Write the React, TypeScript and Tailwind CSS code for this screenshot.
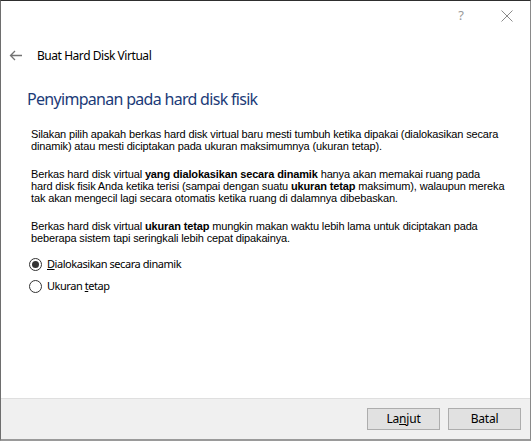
import React from 'react'

const ui = { fontFamily: '"Segoe UI", "Noto Sans", "Liberation Sans", sans-serif' }
const body = { fontFamily: 'Tahoma, "Liberation Sans", "DejaVu Sans", sans-serif' }

const Radio = (props: { checked?: boolean, children: React.ReactNode }) => {
    return (
        <div className="flex items-center h-[22px] pl-[28px]">
            <span className="w-[13px] h-[13px] rounded-full border border-[#333333] bg-white flex items-center justify-center">
                {props.checked && <span className="w-[7px] h-[7px] rounded-full bg-[#333333]" />}
            </span>
            <span className="ml-[5px] text-[11px] tracking-[-0.45px] text-black" style={ui}>{props.children}</span>
        </div>
    )
}

const Button = (props: { children: React.ReactNode }) => {
    return (
        <button type="button" className="w-[73px] h-[22px] bg-[#e1e1e1] border border-[#adadad] text-[12px] tracking-[-0.2px] text-black flex items-center justify-center" style={ui}>
            {props.children}
        </button>
    )
}

export default function App() {
    return (
        <div className="w-[531px] h-[441px] bg-white flex flex-col border-l border-r border-b-2 border-t border-l-[#6e6e6e] border-r-[#8a8a8a] border-b-[#9a9a9a] border-t-[#2e2e2e] overflow-hidden">

            {/* title bar */}
            <div className="h-[29px] flex justify-end shrink-0">
                <div className="w-[46px] flex items-center justify-center text-[13px] text-[#9a9a9a]" style={ui}>?</div>
                <div className="w-[46px] flex items-center justify-center">
                    <svg width="12" height="12" viewBox="0 0 12 12" stroke="#8a8a8a" strokeWidth="1">
                        <path d="M0.5 0.5 L11.5 11.5 M11.5 0.5 L0.5 11.5" />
                    </svg>
                </div>
            </div>

            {/* header */}
            <div className="h-[51px] flex items-center pl-[8px] shrink-0">
                <svg width="13" height="11" viewBox="0 0 13 11" fill="none" stroke="#737373" strokeWidth="1.3">
                    <path d="M13 5.5 H1.5 M6 1 L1.5 5.5 L6 10" />
                </svg>
                <span className="ml-[15px] text-[12px] tracking-[-0.45px] text-black" style={ui}>Buat Hard Disk Virtual</span>
            </div>

            {/* content */}
            <div className="mt-[7px] pl-[26px] text-[16px] tracking-[-0.7px] leading-[22px] text-[#1c3b78]" style={ui}>
                Penyimpanan pada hard disk fisik
            </div>

            <div className="mt-[18px] pl-[30px] text-[11px] tracking-[-0.14px] leading-[12px] text-black whitespace-nowrap" style={body}>
                <p>
                    Silakan pilih apakah berkas hard disk virtual baru mesti tumbuh ketika dipakai (dialokasikan secara<br />
                    dinamik) atau mesti diciptakan pada ukuran maksimumnya (ukuran tetap).
                </p>
                <p className="mt-[16px]">
                    Berkas hard disk virtual <b>yang dialokasikan secara dinamik</b> hanya akan memakai ruang pada<br />
                    hard disk fisik Anda ketika terisi (sampai dengan suatu <b>ukuran tetap</b> maksimum), walaupun mereka<br />
                    tak akan mengecil lagi secara otomatis ketika ruang di dalamnya dibebaskan.
                </p>
                <p className="mt-[16px]">
                    Berkas hard disk virtual <b>ukuran tetap</b> mungkin makan waktu lebih lama untuk diciptakan pada<br />
                    beberapa sistem tapi seringkali lebih cepat dipakainya.
                </p>
            </div>

            <div className="mt-[9px]">
                <Radio checked><u>D</u>ialokasikan secara dinamik</Radio>
                <Radio>Ukuran <u>t</u>etap</Radio>
            </div>

            <div className="flex-1" />

            {/* footer */}
            <div className="h-[41px] shrink-0 bg-[#f0f0f0] border-t border-[#dfdfdf] flex items-center justify-end gap-[8px] pr-[9px]">
                <Button>La<u>n</u>jut</Button>
                <Button>Batal</Button>
            </div>
        </div>
    )
}
